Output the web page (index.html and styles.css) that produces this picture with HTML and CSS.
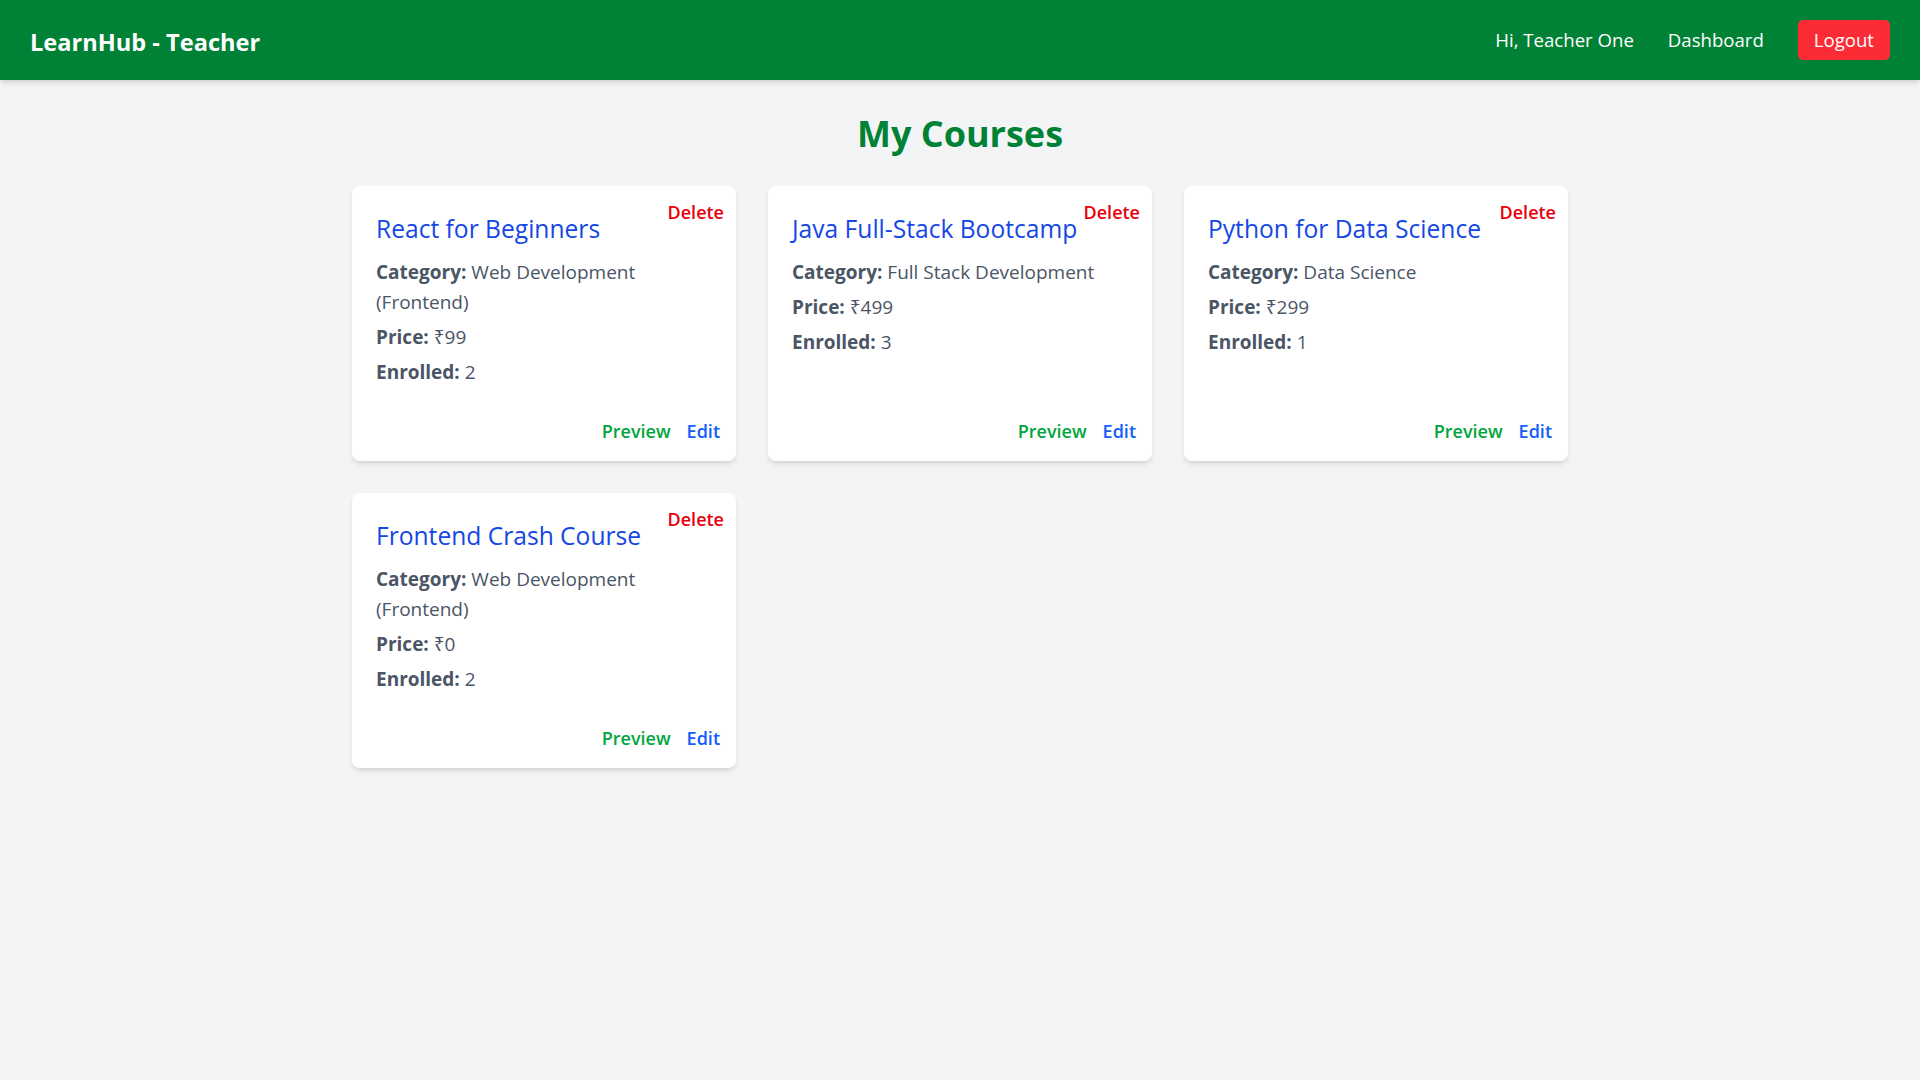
FILE: index.html
```html
<!DOCTYPE html>
<html lang="en">
<head>
<meta charset="UTF-8">
<title>LearnHub - Teacher</title>
<link rel="stylesheet" href="styles.css">
</head>
<body>
<header class="navbar">
  <div class="brand">LearnHub - Teacher</div>
  <nav class="nav-right">
    <span class="nav-greet">Hi, Teacher One</span>
    <a class="nav-link" href="#">Dashboard</a>
    <button class="btn-logout">Logout</button>
  </nav>
</header>
<main class="main">
  <h1 class="page-title">My Courses</h1>
  <div class="grid">
    <div class="card">
      <button class="btn-delete">Delete</button>
      <div class="card-body">
        <h2 class="course-title">React for Beginners</h2>
        <p class="row"><strong>Category:</strong> Web Development (Frontend)</p>
        <p class="row"><strong>Price:</strong> ₹99</p>
        <p class="row"><strong>Enrolled:</strong> 2</p>
      </div>
      <div class="card-actions">
        <a class="act-preview" href="#">Preview</a>
        <a class="act-edit" href="#">Edit</a>
      </div>
    </div>
    <div class="card">
      <button class="btn-delete">Delete</button>
      <div class="card-body">
        <h2 class="course-title">Java Full-Stack Bootcamp</h2>
        <p class="row"><strong>Category:</strong> Full Stack Development</p>
        <p class="row"><strong>Price:</strong> ₹499</p>
        <p class="row"><strong>Enrolled:</strong> 3</p>
      </div>
      <div class="card-actions">
        <a class="act-preview" href="#">Preview</a>
        <a class="act-edit" href="#">Edit</a>
      </div>
    </div>
    <div class="card">
      <button class="btn-delete">Delete</button>
      <div class="card-body">
        <h2 class="course-title">Python for Data Science</h2>
        <p class="row"><strong>Category:</strong> Data Science</p>
        <p class="row"><strong>Price:</strong> ₹299</p>
        <p class="row"><strong>Enrolled:</strong> 1</p>
      </div>
      <div class="card-actions">
        <a class="act-preview" href="#">Preview</a>
        <a class="act-edit" href="#">Edit</a>
      </div>
    </div>
    <div class="card">
      <button class="btn-delete">Delete</button>
      <div class="card-body">
        <h2 class="course-title">Frontend Crash Course</h2>
        <p class="row"><strong>Category:</strong> Web Development (Frontend)</p>
        <p class="row"><strong>Price:</strong> ₹0</p>
        <p class="row"><strong>Enrolled:</strong> 2</p>
      </div>
      <div class="card-actions">
        <a class="act-preview" href="#">Preview</a>
        <a class="act-edit" href="#">Edit</a>
      </div>
    </div>
  </div>
</main>
</body>
</html>
```
FILE: styles.css
```css
* { box-sizing: border-box; }
html, body { margin: 0; padding: 0; }
body {
  background: #f3f4f6;
  font-family: "Open Sans", "Noto Sans", sans-serif;
  color: #4a5565;
  min-height: 100vh;
}
.navbar {
  height: 80px;
  background: #008236;
  display: flex;
  align-items: center;
  justify-content: space-between;
  padding: 0 30px;
  box-shadow: 0 4px 6px -1px rgba(0,0,0,0.1), 0 2px 4px -2px rgba(0,0,0,0.1);
}
.brand {
  color: #fff;
  font-weight: 700;
  font-size: 23.6px;
  line-height: 32px;
  padding-top: 4px;
}
.nav-right {
  display: flex;
  align-items: center;
  gap: 34px;
  font-size: 18.6px;
  line-height: 28px;
}
.nav-greet, .nav-link { color: #fff; text-decoration: none; }
.btn-logout {
  background: #fb2c36;
  color: #fff;
  border: 0;
  border-radius: 5px;
  font-family: inherit;
  font-size: 18.6px;
  line-height: 28px;
  padding: 6px 16px;
  margin-top: 0;
}
.main {
  max-width: 1280px;
  margin: 0 auto;
  padding: 34px 32px 32px;
}
.page-title {
  margin: 0 0 32px;
  text-align: center;
  color: #008236;
  font-size: 36px;
  line-height: 40px;
  font-weight: 700;
}
.grid {
  display: grid;
  grid-template-columns: repeat(3, 1fr);
  gap: 32px;
}
.card {
  position: relative;
  background: #fff;
  border-radius: 8px;
  box-shadow: 0 4px 6px -1px rgba(0,0,0,0.1), 0 2px 4px -2px rgba(0,0,0,0.1);
  display: flex;
  flex-direction: column;
  min-height: 275px;
}
.btn-delete {
  position: absolute;
  top: 12px;
  right: 12px;
  background: none;
  border: 0;
  padding: 0;
  color: #e7000b;
  font-family: inherit;
  font-size: 18px;
  line-height: 28px;
  font-weight: 600;
}
.card-body {
  padding: 27px 24px 0;
}
.course-title {
  margin: 0 0 12px;
  color: #1447e6;
  font-size: 24.6px;
  line-height: 32px;
  font-weight: 400;
}
.row {
  margin: 0 0 5px;
  font-size: 19px;
  line-height: 30px;
}
.row:last-child { margin-bottom: 0; }
.row strong { font-weight: 700; }
.card-actions {
  margin-top: auto;
  display: flex;
  justify-content: flex-end;
  gap: 16px;
  padding: 30px 16px 16px;
  font-size: 18px;
  line-height: 28px;
  font-weight: 600;
}
.card-actions a { text-decoration: none; }
.act-preview { color: #00a63e; }
.act-edit { color: #155dfc; }
```
